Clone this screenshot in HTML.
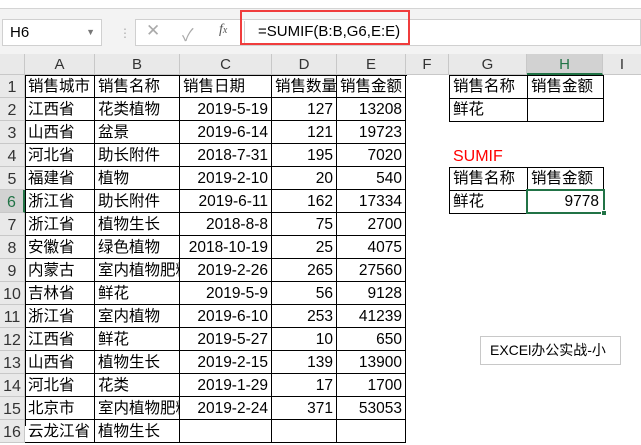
<!DOCTYPE html>
<html><head><meta charset="utf-8"><style>
*{margin:0;padding:0;box-sizing:border-box}
body{width:641px;height:426px;overflow:hidden;background:#fff;font-family:"Liberation Sans","Noto Sans CJK SC",sans-serif;position:relative}
.a{position:absolute}
.c{position:absolute;font-size:15.5px;line-height:24px;white-space:nowrap;overflow:hidden;padding:0 3px;color:#000}
.r{text-align:right}
.h{position:absolute;background:#e9e9e9;color:#333;font-size:15px;text-align:center;line-height:22px;border-right:1px solid #c8c8c8;border-bottom:1px solid #c8c8c8}
</style></head><body>
<div class="a" style="left:0;top:0;width:641px;height:9px;background:#fff;border-bottom:1px solid #d4d4d4"></div>
<div class="a" style="left:0;top:9px;width:641px;height:45px;background:#f3f3f3"></div>
<div class="a" style="left:2px;top:19px;width:100px;height:27px;background:#fff;border:1px solid #d0d0d0;font-size:15px;line-height:25px;padding-left:7px">H6<span style="position:absolute;right:6px;top:0;font-size:9px;color:#777">▼</span></div>
<div class="a" style="left:119px;top:26px;color:#aaa;font-size:12px">⋮</div>
<div class="a" style="left:135px;top:19px;width:506px;height:27px;background:#fff;border:1px solid #d0d0d0"></div>
<div class="a" style="left:146px;top:21px;color:#aaa;font-size:17px">✕</div>
<div class="a" style="left:182px;top:21px;color:#aaa;font-size:17px">✓</div>
<div class="a" style="left:219px;top:22px;color:#555;font-size:14px;font-style:italic;font-family:'Liberation Serif',serif">f<span style="font-size:10px">x</span></div>
<div class="a" style="left:244px;top:21px;width:1px;height:23px;background:#d0d0d0"></div>
<div class="a" style="left:258px;top:23px;font-size:15px">=SUMIF(B:B,G6,E:E)</div>
<div class="a" style="left:240px;top:10px;width:170px;height:35px;border:2px solid #f03c3c"></div>
<div class="h" style="left:0;top:54px;width:25px;height:21px"></div>
<div class="h" style="left:25px;top:54px;width:70px;height:21px">A</div>
<div class="h" style="left:95px;top:54px;width:85px;height:21px">B</div>
<div class="h" style="left:180px;top:54px;width:92px;height:21px">C</div>
<div class="h" style="left:272px;top:54px;width:65px;height:21px">D</div>
<div class="h" style="left:337px;top:54px;width:69px;height:21px">E</div>
<div class="h" style="left:406px;top:54px;width:43px;height:21px">F</div>
<div class="h" style="left:449px;top:54px;width:78px;height:21px">G</div>
<div class="h" style="left:527px;top:54px;width:76px;height:21px;background:#d2d2d2;color:#217346;border-bottom:2px solid #217346">H</div>
<div class="h" style="left:603px;top:54px;width:38px;height:21px;border-right:none">I</div>
<div id="rows"></div>
<div class="a" style="left:480px;top:336px;width:141px;height:29px;border:1px solid #c8c8c8;background:#fff;font-size:14px;line-height:27px;padding-left:9px">EXCEl办公实战-小</div>
<script>
var d=[["销售城市","销售名称","销售日期","销售数量","销售金额"],
["江西省","花类植物","2019-5-19","127","13208"],
["山西省","盆景","2019-6-14","121","19723"],
["河北省","助长附件","2018-7-31","195","7020"],
["福建省","植物","2019-2-10","20","540"],
["浙江省","助长附件","2019-6-11","162","17334"],
["浙江省","植物生长","2018-8-8","75","2700"],
["安徽省","绿色植物","2018-10-19","25","4075"],
["内蒙古","室内植物肥料","2019-2-26","265","27560"],
["吉林省","鲜花","2019-5-9","56","9128"],
["浙江省","室内植物","2019-6-10","253","41239"],
["江西省","鲜花","2019-5-27","10","650"],
["山西省","植物生长","2019-2-15","139","13900"],
["河北省","花类","2019-1-29","17","1700"],
["北京市","室内植物肥料","2019-2-24","371","53053"],
["云龙江省","植物生长","","",""]];
var xs=[25,95,180,272,337,406],h="";
for(var i=0;i<16;i++){var y=75+i*23;
h+='<div class="h" style="left:0;top:'+y+'px;width:25px;height:23px;line-height:25px;font-size:16px;'+(i==5?'background:#d2d2d2;color:#217346;border-right:2px solid #217346':'')+'">'+(i+1)+'</div>';
for(var j=0;j<5;j++){var w=xs[j+1]-xs[j];
h+='<div class="c'+(i>0&&j>1?' r':'')+'" style="left:'+xs[j]+'px;top:'+y+'px;width:'+w+'px;height:23px;border-right:1px solid #000;border-bottom:1px solid #000">'+d[i][j]+'</div>';}
}
h+='<div class="a" style="left:25px;top:75px;width:382px;height:1px;background:#000"></div>';
h+='<div class="a" style="left:25px;top:75px;width:1px;height:351px;background:#000"></div>';
function gt(y){return '<div class="a" style="left:449px;top:'+y+'px;width:155px;height:47px;border:1px solid #000"></div><div class="a" style="left:449px;top:'+(y+23)+'px;width:155px;height:1px;background:#000"></div><div class="a" style="left:527px;top:'+y+'px;width:1px;height:47px;background:#000"></div>'+
'<div class="c" style="left:450px;top:'+y+'px">销售名称</div><div class="c" style="left:528px;top:'+y+'px">销售金额</div><div class="c" style="left:450px;top:'+(y+23)+'px">鲜花</div>';}
h+=gt(75)+gt(167);
h+='<div class="c" style="left:450px;top:145px;color:#ff0000;font-size:16px">SUMIF</div>';
h+='<div class="a" style="left:526px;top:189px;width:79px;height:25px;border:2px solid #217346"></div><div class="a" style="left:601px;top:210px;width:6px;height:6px;background:#217346;border:1px solid #fff"></div>';
h+='<div class="c r" style="left:528px;top:190px;width:74px">9778</div>';
document.getElementById("rows").innerHTML=h;
</script>
</body></html>
